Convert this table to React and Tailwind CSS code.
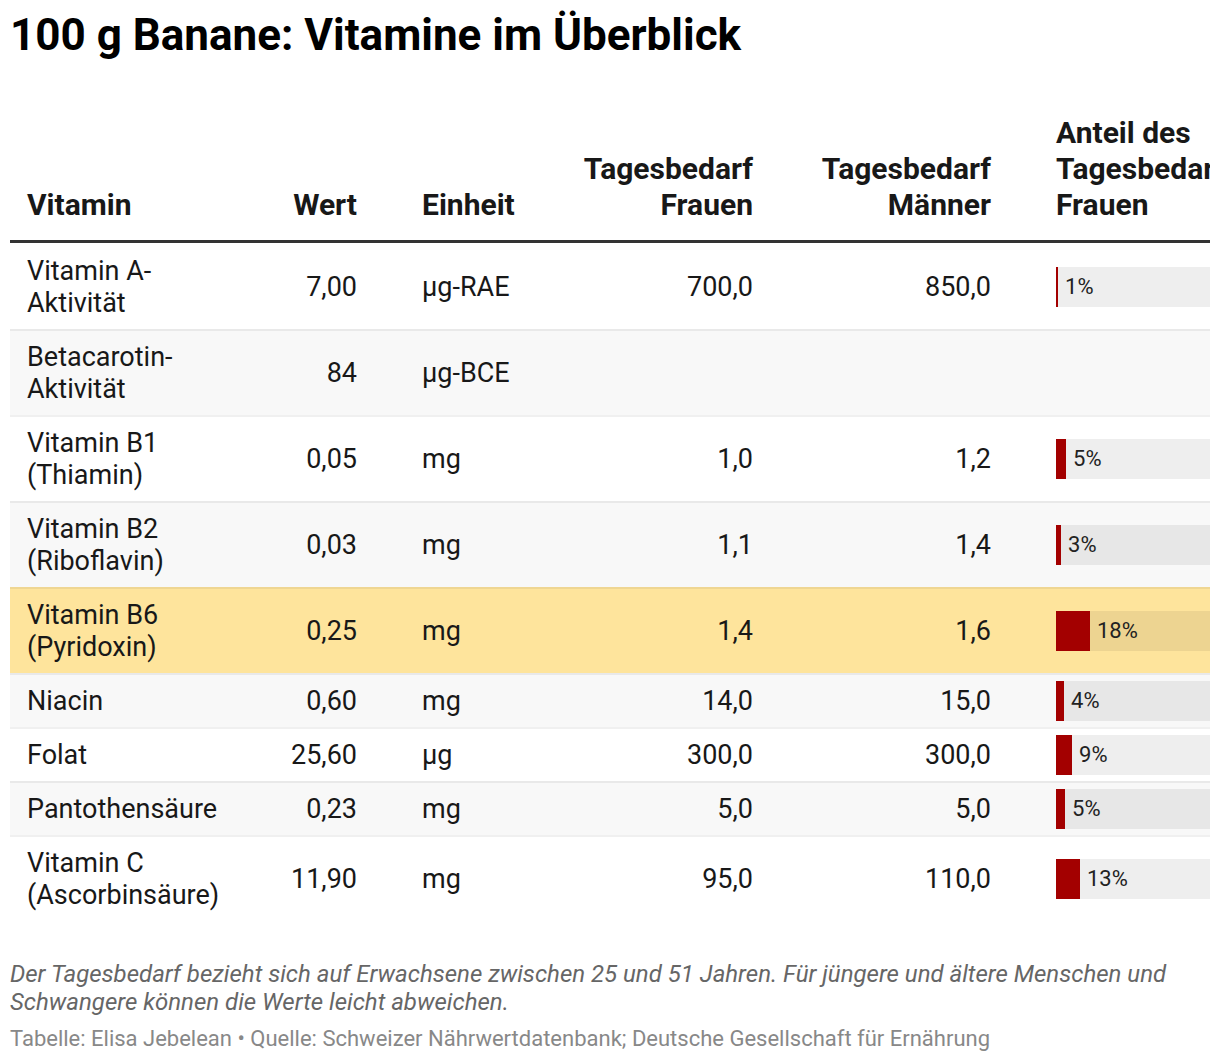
const rows = [
  { name: ['Vitamin A-', 'Aktivität'], wert: '7,00', einheit: 'µg-RAE', frauen: '700,0', maenner: '850,0', pct: 1 },
  { name: ['Betacarotin-', 'Aktivität'], wert: '84', einheit: 'µg-BCE', frauen: '', maenner: '', pct: null },
  { name: ['Vitamin B1', '(Thiamin)'], wert: '0,05', einheit: 'mg', frauen: '1,0', maenner: '1,2', pct: 5 },
  { name: ['Vitamin B2', '(Riboflavin)'], wert: '0,03', einheit: 'mg', frauen: '1,1', maenner: '1,4', pct: 2.73, label: 3 },
  { name: ['Vitamin B6', '(Pyridoxin)'], wert: '0,25', einheit: 'mg', frauen: '1,4', maenner: '1,6', pct: 17.86, label: 18, highlight: true },
  { name: ['Niacin'], wert: '0,60', einheit: 'mg', frauen: '14,0', maenner: '15,0', pct: 4.29, label: 4 },
  { name: ['Folat'], wert: '25,60', einheit: 'µg', frauen: '300,0', maenner: '300,0', pct: 8.53, label: 9 },
  { name: ['Pantothensäure'], wert: '0,23', einheit: 'mg', frauen: '5,0', maenner: '5,0', pct: 4.6, label: 5 },
  { name: ['Vitamin C', '(Ascorbinsäure)'], wert: '11,90', einheit: 'mg', frauen: '95,0', maenner: '110,0', pct: 12.53, label: 13 },
]

function Bar({ pct, label }) {
  if (pct === null) return null
  return (
    <div className="-my-[4px] flex h-[40px] w-[200px] items-center bg-black/[0.065]">
      <div className="h-full bg-[#a30000]" style={{ width: Math.max(2, Math.round(pct * 1.9)) }} />
      <span className="ml-[7px] text-[22px] leading-none text-[#222]">{label ?? pct}%</span>
    </div>
  )
}

export default function App() {
  return (
    <div className="bg-white pb-[14px] text-[#181818]" style={{ fontFamily: 'Roboto, "Noto Sans", sans-serif' }}>
      <h1 className="px-[10px] pt-[11px] text-[44px] font-bold leading-[48px] text-black">100 g Banane: Vitamine im Überblick</h1>

      <div className="mx-[10px] mt-[56px] overflow-hidden">
        <div className="w-[1300px]">
          <div className="flex items-end border-b-[3px] border-[#333] pb-[17px] text-[30px] font-bold leading-[36px]">
            <div className="w-[240px] pl-[17px]">Vitamin</div>
            <div className="w-[156px] pr-[49px] text-right">Wert</div>
            <div className="w-[144px] pl-[16px]">Einheit</div>
            <div className="w-[219px] pr-[16px] text-right">Tagesbedarf<br />Frauen</div>
            <div className="w-[238px] pr-[16px] text-right">Tagesbedarf<br />Männer</div>
            <div className="w-[300px] pl-[49px]">Anteil des<br />Tagesbedarfs<br />Frauen</div>
          </div>

          {rows.map((r, i) => (
            <div
              key={i}
              className={`flex items-center py-[10px] text-[27px] leading-[32px] ${i > 0 ? 'border-t-2 border-black/[0.06]' : 'border-t-2 border-transparent'} ${r.highlight ? 'bg-[#fee49c]' : i % 2 === 1 ? 'bg-[#f8f8f8]' : 'bg-white'}`}
            >
              <div className="w-[240px] pl-[17px]">
                {r.name.map((n, j) => <div key={j}>{n}</div>)}
              </div>
              <div className="w-[156px] pr-[49px] text-right">{r.wert}</div>
              <div className="w-[144px] pl-[16px]">{r.einheit}</div>
              <div className="w-[219px] pr-[16px] text-right">{r.frauen}</div>
              <div className="w-[238px] pr-[16px] text-right">{r.maenner}</div>
              <div className="w-[300px] pl-[49px]">
                <Bar pct={r.pct} label={r.label} />
              </div>
            </div>
          ))}
        </div>
      </div>

      <p className="mt-[39px] px-[10px] text-[24px] italic leading-[28px] text-[#666]">
        Der Tagesbedarf bezieht sich auf Erwachsene zwischen 25 und 51 Jahren. Für jüngere und ältere Menschen und Schwangere können die Werte leicht abweichen.
      </p>
      <p className="mt-[9px] px-[10px] text-[22px] leading-[28px] text-[#888]">
        Tabelle: Elisa Jebelean • Quelle: Schweizer Nährwertdatenbank; Deutsche Gesellschaft für Ernährung
      </p>
    </div>
  )
}
